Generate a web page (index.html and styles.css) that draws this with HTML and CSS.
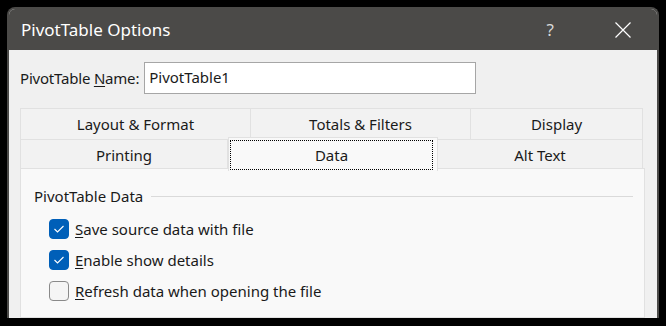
FILE: index.html
```html
<!DOCTYPE html>
<html lang="en">
<head>
  <meta charset="UTF-8">
  <title>PivotTable Options</title>
  <link rel="stylesheet" href="styles.css">
</head>
<body>
  <div class="window">
    <div class="titlebar">
      <span class="title">PivotTable Options</span>
      <span class="help">?</span>
      <span class="close">
        <svg width="16" height="16" viewBox="0 0 16 16"><path d="M0.5 0.5 L15.5 15.5 M15.5 0.5 L0.5 15.5" stroke="#ffffff" stroke-width="1.2" fill="none"/></svg>
      </span>
    </div>

    <div class="content">
      <div class="name-row">
        <label class="name-label">PivotTable <u>N</u>ame:</label>
        <div class="name-input">PivotTable1</div>
      </div>

      <div class="tabs">
        <div class="tab-row">
          <div class="tab t-layout">Layout &amp; Format</div>
          <div class="tab t-totals">Totals &amp; Filters</div>
          <div class="tab t-display">Display</div>
        </div>
        <div class="tab-row">
          <div class="tab t-printing">Printing</div>
          <div class="tab t-data active"><span class="focus">Data</span></div>
          <div class="tab t-alt">Alt Text</div>
        </div>
      </div>

      <div class="panel">
        <div class="group-title">
          <span>PivotTable Data</span>
          <div class="group-line"></div>
        </div>
        <div class="check-row">
          <span class="box checked">
            <svg width="12" height="10" viewBox="0 0 12 10"><path d="M1.5 5 L4.5 8 L10.5 2" stroke="#ffffff" stroke-width="1.1" fill="none"/></svg>
          </span>
          <span class="check-label"><u>S</u>ave source data with file</span>
        </div>
        <div class="check-row">
          <span class="box checked">
            <svg width="12" height="10" viewBox="0 0 12 10"><path d="M1.5 5 L4.5 8 L10.5 2" stroke="#ffffff" stroke-width="1.1" fill="none"/></svg>
          </span>
          <span class="check-label"><u>E</u>nable show details</span>
        </div>
        <div class="check-row">
          <span class="box"></span>
          <span class="check-label"><u>R</u>efresh data when opening the file</span>
        </div>
      </div>
    </div>
  </div>
</body>
</html>
```

FILE: styles.css
```css
:root {
  --title: #4b4a48;
  --body: #f0f0f0;
  --panel: #f9f9f9;
  --tab: #f2f2f2;
  --line: #e1e1e1;
  --accent: #005fb8;
  --text: #1a1a1a;
}

body {
  margin: 0;
  padding: 7px 0 0 7px;
  background: #000000;
  font-family: 'Noto Sans', 'Open Sans', sans-serif;
  color: var(--text);
}

.window {
  width: 648px;
  height: 309px;
  border: 2px solid var(--title);
  border-bottom: none;
  border-radius: 8px 8px 0 0;
  background: var(--body);
  overflow: hidden;
  display: flex;
  flex-direction: column;
}

.titlebar {
  height: 43px;
  background: var(--title);
  display: flex;
  align-items: center;
  color: #ffffff;
}

.title {
  font-size: 17px;
  margin-left: 12px;
  flex: 1;
}

.help {
  font-size: 17px;
  color: #d8d8d8;
  margin-right: 61px;
}

.close {
  display: flex;
  margin-right: 26px;
}

.content {
  padding: 12px 0 0 11px;
  display: flex;
  flex-direction: column;
}

.name-row {
  display: flex;
  align-items: center;
  gap: 5px;
  font-size: 15px;
}

.name-label {
  letter-spacing: -0.2px;
}

.name-label u,
.check-label u {
  text-decoration-thickness: 1px;
  text-underline-offset: 2px;
}

.name-input {
  width: 326px;
  height: 30px;
  border: 1px solid #a6a6a6;
  background: #ffffff;
  padding-left: 4px;
  line-height: 29px;
}

.tabs {
  margin-top: 14px;
  width: 623px;
  font-size: 15px;
}

.tab-row {
  display: flex;
  height: 31px;
}

.tab {
  box-sizing: border-box;
  background: var(--tab);
  border: 1px solid var(--line);
  border-left: none;
  border-bottom: none;
  display: flex;
  align-items: center;
  justify-content: center;
}

.tab-row .tab:first-child {
  border-left: 1px solid var(--line);
}

.t-layout { width: 231px; }
.t-totals { width: 220px; }
.t-display { width: 172px; }
.t-printing { width: 208px; }
.t-data { width: 210px; }
.t-alt { width: 205px; }

.tab.active {
  background: var(--panel);
  margin-top: -2px;
  height: 34px;
  border-left: 1px solid var(--line);
  position: relative;
  z-index: 1;
  align-items: flex-start;
}

.tab.active + .tab {
  border-left: none;
}

.focus {
  box-sizing: border-box;
  width: 202px;
  height: 28px;
  margin: 3px 5px 0 2px;
  outline: 1px dotted #000000;
  display: flex;
  align-items: center;
  justify-content: center;
}

.panel {
  box-sizing: border-box;
  width: 625px;
  height: 150px;
  margin-top: -2px;
  background: var(--panel);
  border: 1px solid var(--line);
  padding: 17px 11px 0 13px;
  font-size: 15px;
}

.group-title {
  display: flex;
  align-items: center;
  gap: 8px;
}

.group-line {
  flex: 1;
  height: 1px;
  background: #dadada;
}

.check-row {
  display: flex;
  align-items: center;
  gap: 6px;
  margin-left: 15px;
  height: 31px;
}

.group-title + .check-row {
  margin-top: 7px;
}

.box {
  box-sizing: border-box;
  width: 20px;
  height: 20px;
  border-radius: 4px;
  border: 1px solid #8a8a8a;
  background: #f5f5f5;
  display: flex;
  align-items: center;
  justify-content: center;
}

.box.checked {
  background: var(--accent);
  border-color: var(--accent);
}
```
